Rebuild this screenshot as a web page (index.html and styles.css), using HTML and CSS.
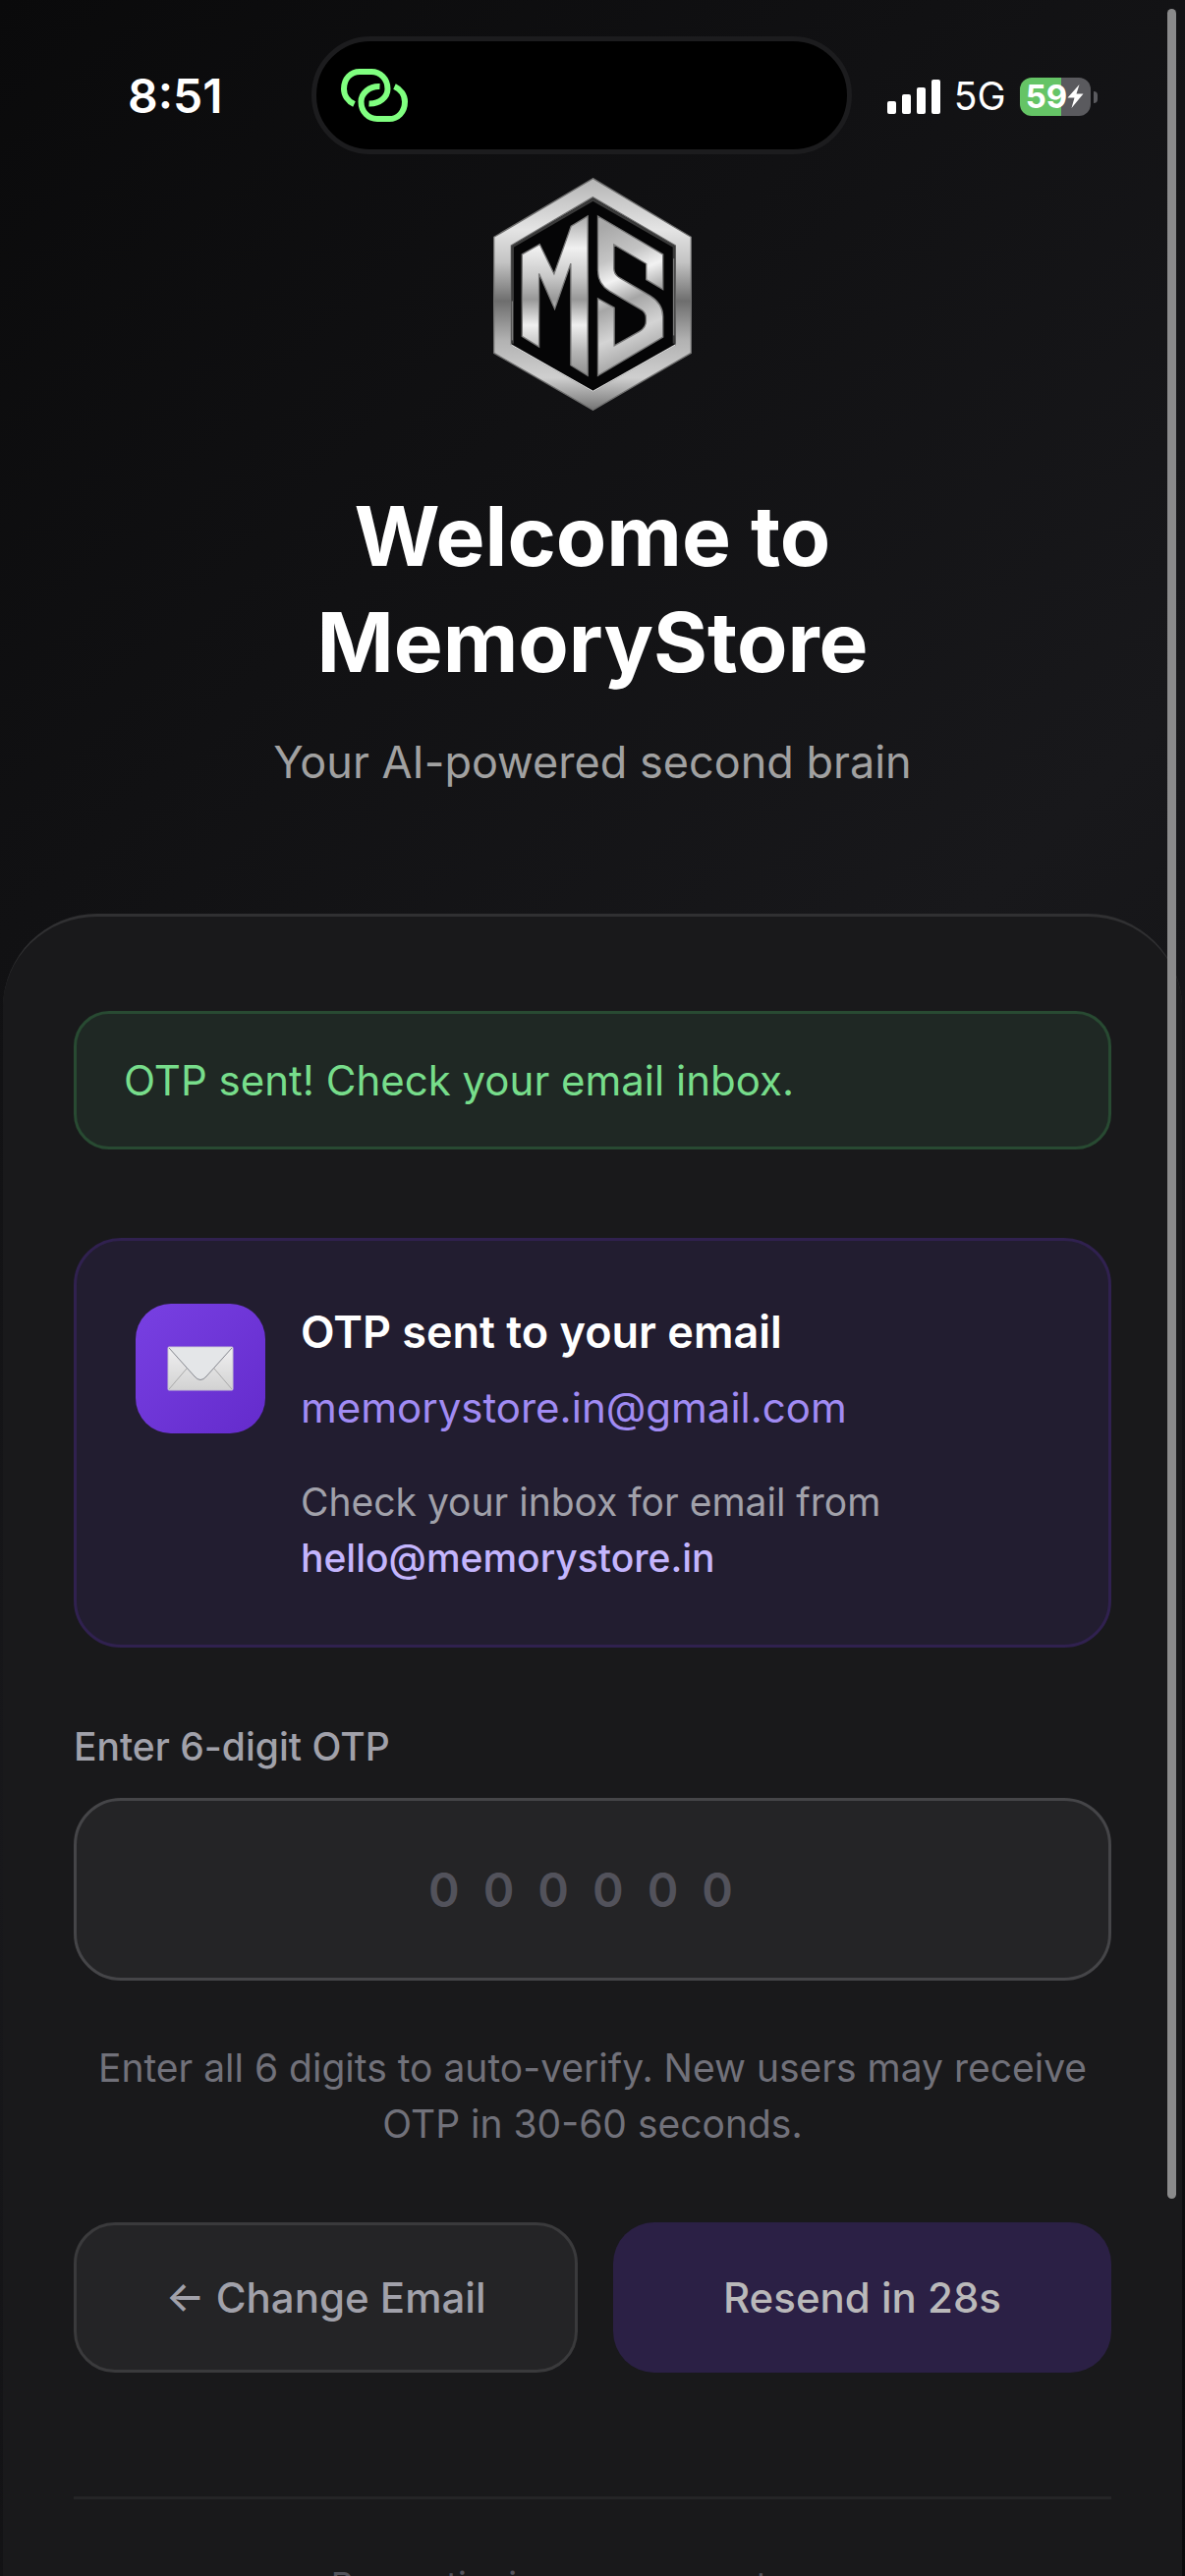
FILE: index.html
```html
<!DOCTYPE html>
<html lang="en">
<head>
    <meta charset="UTF-8">
    <title>MemoryStore - Verify OTP</title>
    <meta name="viewport" content="width=device-width, initial-scale=1.0">
    <link rel="stylesheet" href="styles.css">
</head>
<body>
<div class="status-bar">
    <div class="status-time">8:51</div>
    <div class="island">
        <svg class="link-icon" viewBox="0 0 68 54" fill="none" stroke="#80ff80" stroke-width="6">
            <path d="M13.5 36C7 33 3 27 3 20.500C3 10 10 3 19 3h12C40 3 47.500 10 47.500 20.500C47.500 29 39 36 28.500 35.500"/>
            <path d="M54.500 18C61 21 65 27 65 33.500C65 44 58 51 49 51H37C28 51 20.500 44 20.500 33.500C20.500 25 29 17.500 39.500 18"/>
        </svg>
    </div>
    <div class="status-right">
        <svg class="signal-icon" viewBox="0 0 54 36" fill="#fff">
            <rect x="0" y="23" width="9" height="13" rx="2"/>
            <rect x="15" y="16" width="9" height="20" rx="2"/>
            <rect x="30" y="9" width="9" height="27" rx="2"/>
            <rect x="45" y="1" width="9" height="35" rx="2"/>
        </svg>
        <span class="network">5G</span>
        <div class="battery">
            <span class="battery-level">59</span>
            <svg class="bolt-icon" viewBox="0 0 16 24" fill="#fff">
                <path d="M12 0L0 13.500h7L4 24L16 9.500H9z"/>
            </svg>
        </div>
    </div>
</div>

<header class="hero">
    <svg class="logo" viewBox="65 63 607 712" role="img" aria-label="MS">
        <defs>
            <linearGradient id="frame" x1="0" y1="0" x2="0" y2="1">
                <stop offset="0" stop-color="#b4b4b4"/>
                <stop offset=".22" stop-color="#e4e4e4"/>
                <stop offset=".36" stop-color="#c4c4c4"/>
                <stop offset=".53" stop-color="#6e6e6e"/>
                <stop offset=".7" stop-color="#b2b2b2"/>
                <stop offset=".86" stop-color="#cfcfcf"/>
                <stop offset="1" stop-color="#747474"/>
            </linearGradient>
            <linearGradient id="steel" gradientUnits="userSpaceOnUse" x1="0" y1="180" x2="0" y2="670">
                <stop offset="0" stop-color="#aaaaaa"/>
                <stop offset=".2" stop-color="#f0f0f0"/>
                <stop offset=".38" stop-color="#c8c8c8"/>
                <stop offset=".52" stop-color="#989898"/>
                <stop offset=".68" stop-color="#efefef"/>
                <stop offset=".85" stop-color="#b4b4b4"/>
                <stop offset="1" stop-color="#8e8e8e"/>
            </linearGradient>
            <linearGradient id="curve" gradientUnits="userSpaceOnUse" x1="385" y1="220" x2="560" y2="640">
                <stop offset="0" stop-color="#a8a8a8"/>
                <stop offset=".22" stop-color="#c4c4c4"/>
                <stop offset=".36" stop-color="#f2f2f2"/>
                <stop offset=".52" stop-color="#a6a6a6"/>
                <stop offset=".72" stop-color="#d4d4d4"/>
                <stop offset="1" stop-color="#929292"/>
            </linearGradient>
        </defs>
        <path fill="#050506" d="M370 90L650 255V590L370 745L90 590V255z"/>
        <path fill="url(#frame)" stroke="#6f6f6f" stroke-width="4" fill-rule="evenodd" d="M370 65L670 244V599L370 773L67 599V244zM370 122L120 270V573L370 716L622 573V270z"/>
        <path fill="none" stroke="#3a3a3a" stroke-width="8" d="M124 570V273L370 130L618 273V570"/>
        <path fill="none" stroke="#e8e8e8" stroke-width="3" d="M120 574L370 716L622 574"/>
        <path fill="none" stroke="#8c8c8c" stroke-width="3" d="M617 545V310M123 440V560"/>
        <g stroke="#777" stroke-width="4">
            <path fill="url(#steel)" d="M153 297L207 266L251 357L303 211L354 180V668L302 636V325L253 464L205 356V580L153 548z"/>
            <path fill="url(#curve)" d="M385 180L584 297V404L533 374V326L434 267V340C434 355 440 362 452 369L545 424C572 441 584 462 584 488V550L385 668V432L435 460V576L512 533C526 525 532 516 532 502V490C532 478 526 471 516 465L420 409C396 394 385 374 385 346z"/>
        </g>
    </svg>
    <h1>Welcome to<br>MemoryStore</h1>
    <p class="tagline">Your AI-powered second brain</p>
</header>

<main class="card">
    <div class="alert-success" role="status">OTP sent! Check your email inbox.</div>

    <section class="otp-info">
        <div class="otp-icon">
            <svg class="mail-icon" viewBox="0 0 68 46">
                <defs>
                    <linearGradient id="paper" x1="0" y1="0" x2="0" y2="1">
                        <stop offset="0" stop-color="#f0f0f1"/>
                        <stop offset="1" stop-color="#d2d2d2"/>
                    </linearGradient>
                </defs>
                <rect x="1" y="1" width="66" height="44" rx="1" fill="url(#paper)" stroke="#c4bfd0"/>
                <path d="M2 44L20 23M66 44L48 23" fill="none" stroke="#aaa" stroke-width="1"/>
                <path d="M2 2L28 31Q34 38 40 31L66 2" fill="#e4e6e8" stroke="#85878f" stroke-width="1"/>
            </svg>
        </div>
        <div class="otp-text">
            <h2>OTP sent to your email</h2>
            <p class="otp-email">memorystore.in@gmail.com</p>
            <p class="otp-note">Check your inbox for email from <strong>hello@memorystore.in</strong></p>
        </div>
    </section>

    <form class="otp-form">
        <label for="otp">Enter 6-digit OTP</label>
        <input type="text" id="otp" class="otp-input" inputmode="numeric" maxlength="6" placeholder="000000">
        <p class="hint">Enter all 6 digits to auto-verify. New users may receive OTP in 30-60 seconds.</p>
        <div class="button-row">
            <button type="button" class="btn btn-back">← Change Email</button>
            <button type="button" class="btn btn-resend" disabled>Resend in 28s</button>
        </div>
    </form>

    <footer class="terms">By continuing, you agree to our</footer>
</main>
<div class="scroll-thumb"></div>
</body>
</html>
```
FILE: styles.css
```css
* {
    box-sizing: border-box;
    margin: 0;
    padding: 0;
}
html {
    background: #0a0a0b;
}
body {
    font-family: Inter, 'Liberation Sans', sans-serif;
    min-height: 100vh;
    height: 100vh;
    overflow: hidden;
    position: relative;
    color: #fff;
    background: linear-gradient(135deg, #0a0a0b 0%, #18181b 50%, #0a0a0b 100%);
}

/* status bar */
.status-bar {
    display: grid;
    grid-template-columns: 14fr 550px 15fr;
    align-items: center;
    padding-top: 37px;
}
.status-time,
.status-right {
    padding-top: 2px;
}
.status-time {
    font-size: 48px;
    font-weight: 600;
    line-height: 60px;
    padding-left: 130px;
}
.island {
    height: 120px;
    border: 5px solid #1c1c1e;
    border-radius: 60px;
    background: #000;
    display: flex;
    align-items: center;
    padding-left: 25px;
}
.link-icon {
    width: 68px;
    height: 54px;
}
.status-right {
    display: flex;
    align-items: center;
    padding-left: 36px;
}
.signal-icon {
    width: 54px;
    height: 36px;
}
.network {
    font-size: 39px;
    line-height: 48px;
    margin: 0 14px;
}
.battery {
    position: relative;
    display: flex;
    align-items: center;
    justify-content: center;
    width: 72px;
    height: 39px;
    border-radius: 12px;
    background: linear-gradient(90deg, #65c466 59%, #5a5a5e 59%);
}
.battery::after {
    content: "";
    position: absolute;
    left: 75px;
    top: 14px;
    width: 4px;
    height: 12px;
    border-radius: 0 4px 4px 0;
    background: #5a5a5e;
}
.battery-level {
    font-size: 33px;
    font-weight: 700;
    line-height: 39px;
}
.bolt-icon {
    width: 17px;
    height: 24px;
}

/* hero */
.hero {
    display: flex;
    flex-direction: column;
    align-items: center;
    text-align: center;
    padding: 24px 48px 0;
}
.logo {
    width: 202px;
    height: 237px;
}
h1 {
    font-size: 84px;
    font-weight: 700;
    line-height: 108px;
    margin-top: 74px;
}
.tagline {
    font-size: 45px;
    line-height: 68px;
    color: #a1a1a1;
    margin-top: 34px;
}

/* card */
.card {
    margin: 120px 3px 0;
    border-top: 3px solid #303032;
    border-radius: 96px 96px 0 0;
    background: #19191b;
    padding: 96px 72px 0;
}
.alert-success {
    border: 3px solid #284a32;
    border-radius: 36px;
    background: #1f2824;
    color: #77dd8b;
    font-size: 42px;
    line-height: 63px;
    padding: 36px 48px;
}
.otp-info {
    display: flex;
    align-items: flex-start;
    gap: 36px;
    margin-top: 90px;
    border: 3px solid #30214f;
    border-radius: 48px;
    background: #221d30;
    padding: 60px;
}
.otp-icon {
    display: flex;
    align-items: center;
    justify-content: center;
    flex: none;
    width: 132px;
    height: 132px;
    margin-top: 4px;
    border-radius: 36px;
    background: linear-gradient(135deg, #7840e2, #642bcc);
}
.mail-icon {
    width: 68px;
    height: 46px;
}
h2 {
    font-size: 45px;
    font-weight: 600;
    line-height: 66px;
}
.otp-email {
    font-size: 42px;
    line-height: 63px;
    margin-top: 12px;
    color: #a18bf3;
}
.otp-note {
    font-size: 39px;
    line-height: 57px;
    margin-top: 36px;
    color: #a1a1aa;
}
.otp-note strong {
    display: block;
    font-weight: 500;
    color: #c4b5fd;
}
.otp-form label {
    display: block;
    font-size: 39px;
    font-weight: 500;
    line-height: 57px;
    margin-top: 72px;
    color: #a1a1aa;
}
.otp-input {
    display: block;
    width: 100%;
    height: 186px;
    margin-top: 24px;
    border: 3px solid #454548;
    border-radius: 48px;
    background: #242426;
    color: #fff;
    font-family: inherit;
    font-size: 48px;
    font-weight: 600;
    letter-spacing: 24px;
    text-align: center;
}
.otp-input::placeholder {
    color: #52525b;
    opacity: 1;
}
.hint {
    font-size: 39px;
    line-height: 57px;
    margin-top: 60px;
    text-align: center;
    color: #71717a;
}
.button-row {
    display: flex;
    gap: 36px;
    margin-top: 72px;
}
.btn {
    flex: 1;
    height: 153px;
    border: none;
    border-radius: 42px;
    font-family: inherit;
    font-size: 42px;
    font-weight: 500;
}
.btn-back {
    border: 3px solid #3a3a3c;
    background: #242426;
    color: #a1a1aa;
}
.btn-resend {
    background: #2b2045;
    color: #bab9ba;
}
.terms {
    margin-top: 126px;
    padding-top: 60px;
    border-top: 3px solid #252527;
    font-size: 36px;
    line-height: 54px;
    text-align: center;
    color: #52525b;
}

/* page scroll indicator */
.scroll-thumb {
    position: absolute;
    top: 9px;
    right: 9px;
    width: 9px;
    height: 85%;
    border-radius: 5px;
    background: #8a8a8b;
}
```
